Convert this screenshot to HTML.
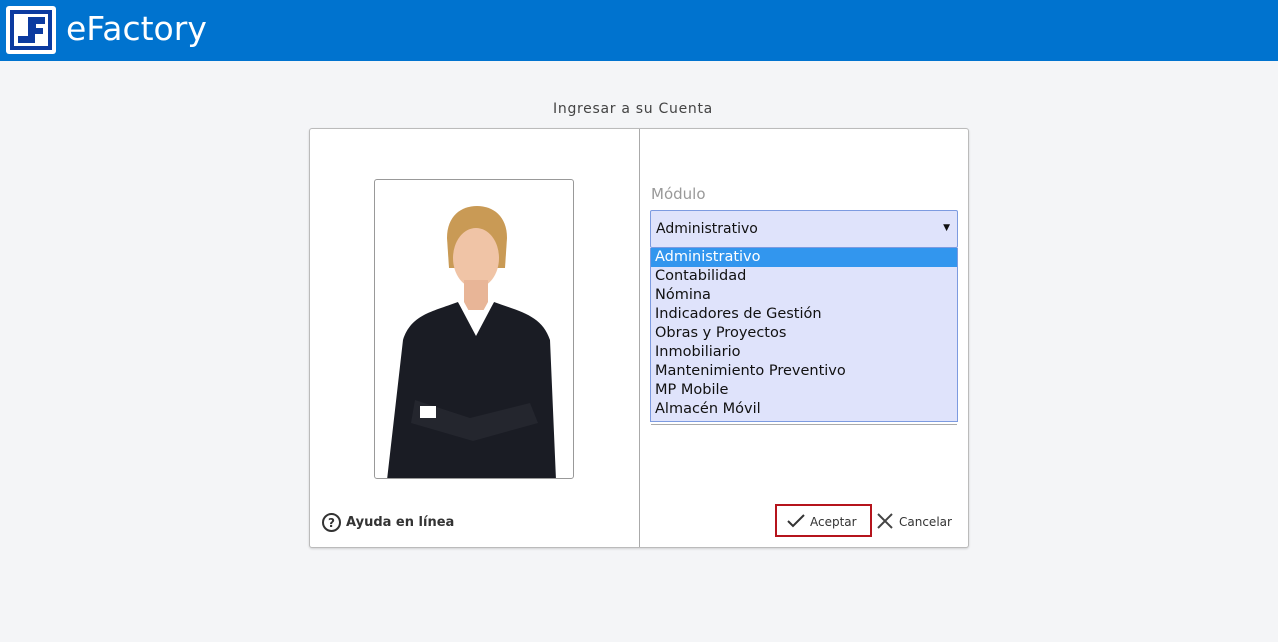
<!DOCTYPE html>
<html><head><meta charset="utf-8"><style>
*{margin:0;padding:0;box-sizing:border-box}
body{width:1278px;height:642px;background:#f4f5f7;font-family:"DejaVu Sans","Liberation Sans",sans-serif;position:relative;overflow:hidden}
.hdr{position:absolute;left:0;top:0;width:1278px;height:61px;background:#0073cf}
.logo{position:absolute;left:6px;top:6px;width:50px;height:48px;background:#fff;border-radius:3px}
.logo .in{position:absolute;left:4px;top:4px;width:42px;height:40px;background:#0b3aa0}
.logo .in2{position:absolute;left:8px;top:8px;width:34px;height:32px;background:#fff}
.brand{position:absolute;left:66px;top:9px;color:#fff;font-size:33px;font-family:"DejaVu Sans",sans-serif}
.title{position:absolute;left:-6px;width:1278px;top:101px;text-align:center;font-size:14px;color:#444;letter-spacing:.7px}
.card{position:absolute;left:309px;top:128px;width:660px;height:420px;background:#fff;border:1px solid #bbb;border-radius:3px;box-shadow:0 1px 2px rgba(0,0,0,.15)}
.div{position:absolute;left:329px;top:0;width:1px;height:418px;background:#aaa}
.photo{position:absolute;left:64px;top:50px;width:200px;height:300px;border:1px solid #999;border-radius:3px;background:#fff;overflow:hidden}
.lbl{position:absolute;left:341px;top:56px;font-size:15px;color:#999}
.sel{position:absolute;left:340px;top:81px;width:308px;height:38px;background:#dfe3fb;border:1px solid #7d9be0;border-radius:2px;font-size:14px;padding:10px 5px;color:#111}
.sel .ar{position:absolute;right:7px;top:12px;font-size:9px}
.list{position:absolute;left:340px;top:119px;width:308px;height:174px;background:#dfe3fb;border:1px solid #7d9be0;border-top:none;box-shadow:0 3px 0 -1px #fff,0 4px 0 -1px #aaa}
.list div{height:19px;line-height:19px;font-size:14.5px;padding-left:4px;color:#111}
.list .hl{background:#3296ee;color:#fff}
.help{position:absolute;left:12px;top:384px;font-size:13px;font-weight:bold;color:#333}
.q{display:inline-block;width:19px;height:19px;border:2px solid #333;border-radius:50%;text-align:center;font-size:12px;line-height:16px;vertical-align:middle;margin-right:5px}
.ok{position:absolute;left:465px;top:375px;width:97px;height:33px;border:2px solid #b5141c}
.btn{position:absolute;top:386px;font-size:12px;color:#333}
</style></head><body>
<div class="hdr"><div class="logo"><div class="in"></div><div class="in2"></div>
<svg style="position:absolute;left:8px;top:8px" width="34" height="32" viewBox="0 0 34 32"><path d="M16 3h15v7H22v4h7v6h-8v9H4v-7h10V3z" fill="#0b3aa0"/></svg></div>
<div class="brand">eFactory</div></div>
<div class="title">Ingresar a su Cuenta</div>
<div class="card">
<div class="div"></div>
<div class="photo"><svg width="200" height="300" viewBox="0 0 200 300">
<path d="M72 58c0-22 14-32 30-32s30 10 30 32l-2 30H74z" fill="#c99a55"/>
<ellipse cx="101" cy="78" rx="23" ry="30" fill="#f0c4a6"/>
<path d="M89 100h24v30H89z" fill="#e8b597"/>
<path d="M28 160c8-25 28-28 55-38l18 30 18-30c28 10 48 14 56 38l6 140H12z" fill="#1a1c24"/>
<path d="M83 122l18 34 18-34-6 0-12 22-12-22z" fill="#fff"/>
<path d="M40 220l55 18 60-15 8 20-65 18-62-18z" fill="#24262e"/>
<rect x="45" y="226" width="16" height="12" fill="#fff"/>
</svg></div>
<div class="lbl">Módulo</div>
<div class="sel">Administrativo<span class="ar">▼</span></div>
<div class="list"><div class="hl">Administrativo</div><div>Contabilidad</div><div>Nómina</div><div>Indicadores de Gestión</div><div>Obras y Proyectos</div><div>Inmobiliario</div><div>Mantenimiento Preventivo</div><div>MP Mobile</div><div>Almacén Móvil</div></div>
<div class="help"><span class="q">?</span>Ayuda en línea</div>
<div class="ok"></div>
<svg style="position:absolute;left:477px;top:385px" width="18" height="14"><path d="M1 7l5 5 11-11" stroke="#333" stroke-width="2" fill="none"/></svg>
<div class="btn" style="left:500px">Aceptar</div>
<svg style="position:absolute;left:567px;top:384px" width="16" height="16"><path d="M1 1l14 14M15 1L1 15" stroke="#444" stroke-width="2"/></svg>
<div class="btn" style="left:589px">Cancelar</div>
</div>
</body></html>
